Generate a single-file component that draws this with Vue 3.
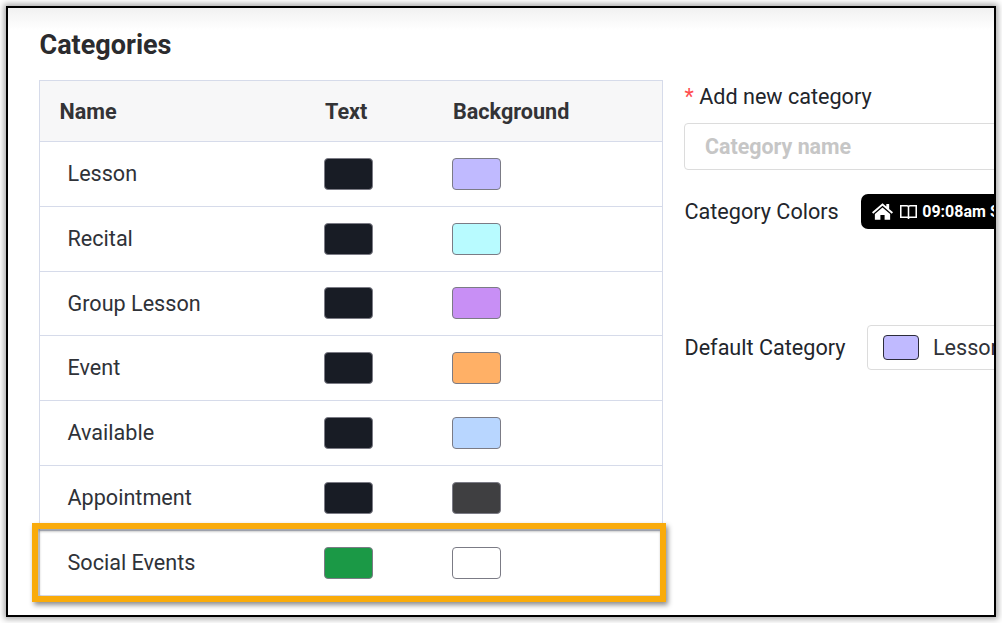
<script setup>
const rows = [
  { name: 'Lesson', text: '#181c25', bg: '#c0baff' },
  { name: 'Recital', text: '#181c25', bg: '#b8fbff' },
  { name: 'Group Lesson', text: '#181c25', bg: '#c88ff5' },
  { name: 'Event', text: '#181c25', bg: '#ffb066' },
  { name: 'Available', text: '#181c25', bg: '#b8d6ff' },
  { name: 'Appointment', text: '#181c25', bg: '#3f3f41' },
  { name: 'Social Events', text: '#1b9946', bg: '#ffffff' }
]
</script>

<template>
  <div class="page">
    <div class="frame">
      <div class="content">
        <h1 class="title">Categories</h1>
        <div class="columns">
          <div class="table">
            <div class="row head">
              <div class="c-name">Name</div>
              <div class="c-text head-shift">Text</div>
              <div class="c-bg head-shift">Background</div>
            </div>
            <div v-for="r in rows" :key="r.name" class="row">
              <div class="c-name cell-name">{{ r.name }}</div>
              <div class="c-text"><span class="swatch" :style="{ background: r.text }"></span></div>
              <div class="c-bg"><span class="swatch" :style="{ background: r.bg }"></span></div>
            </div>
          </div>
          <div class="side">
            <div class="label"><span class="req">*</span> Add new category</div>
            <div class="input">Category name</div>
            <div class="color-line">
              <span class="side-label">Category Colors</span>
              <div class="chip">
                <svg class="home" viewBox="1 1.5 22 17.5" width="21" height="17">
                  <path fill="#fff" d="M12 1.500 1 11l1.300 1.500L12 4.200l9.700 8.300L23 11l-4-3.400V2.500h-3v2.500z"/>
                  <path fill="#fff" d="M12 6 4 12.800V19h5.800v-5h4.400v5H20v-6.200z"/>
                </svg>
                <svg class="book" viewBox="0.25 0.75 16.5 13.5" width="17" height="14">
                  <path fill="none" stroke="#fff" stroke-width="1.500" d="M1 1.500h6c1 0 1.500.5 1.500 1.500 0-1 .5-1.500 1.500-1.500h6v11h-6.500l-1 1-1-1H1zM8.500 3v9.500"/>
                </svg>
                <span class="chip-text">09:08am Social</span>
              </div>
            </div>
            <div class="default-line">
              <span class="side-label">Default Category</span>
              <div class="select">
                <span class="mini"></span>
                <span class="select-text">Lesson</span>
              </div>
            </div>
          </div>
        </div>
      </div>
      <div class="highlight"></div>
    </div>
  </div>
</template>

<style>
html, body { margin: 0; background: #fff; overflow: hidden; }
</style>

<style scoped>
.page {
  width: 1002px;
  height: 623px;
  box-sizing: border-box;
  padding: 6px;
  background: #fff;
  font-family: Roboto, "Liberation Sans", sans-serif;
  color: #2b2e33;
}
.frame {
  position: relative;
  width: 100%;
  height: 611px;
  box-sizing: border-box;
  border: 2px solid #000;
  box-shadow: 0 0 6px 2px rgba(0, 0, 0, 0.35);
  background: linear-gradient(#f1f1f1 0, #fff 22px);
  overflow: hidden;
}
.content {
  padding: 21px 0 0 31px;
}
.title {
  margin: 0 0 18px;
  font-size: 27px;
  line-height: 33px;
  font-weight: 700;
  color: #2b2b2e;
  padding-left: 0.5px;
}
.columns {
  display: flex;
  gap: 21px;
  align-items: flex-start;
}
.table {
  width: 624px;
  flex: none;
  box-sizing: border-box;
  border: 1px solid #d6dbea;
  border-bottom: 0;
}
.row {
  display: flex;
  align-items: center;
  height: 64.8px;
  box-sizing: border-box;
  border-bottom: 1px solid #d6dbea;
  font-size: 21.6px;
}
.row.head {
  height: 61px;
  background: #f7f7f8;
  font-weight: 700;
  color: #333336;
}
.c-name { width: 284px; box-sizing: border-box; padding-left: 19.5px; flex: none; }
.cell-name { padding-left: 27.5px; padding-bottom: 0.6px; color: #2f3238; }
.c-text { width: 128px; flex: none; display: flex; }
.c-bg { flex: 1; display: flex; }
.head-shift { box-sizing: border-box; padding-left: 1px; }
.swatch {
  display: block;
  width: 49px;
  height: 32px;
  box-sizing: border-box;
  border: 1px solid #7b7b85;
  border-radius: 4px;
}
.side {
  flex: none;
  width: 340px;
  margin-top: 2px;
}
.label {
  font-size: 21.6px;
  line-height: 30px;
  color: #22252b;
  padding-left: 0.5px;
}
.req { color: #ff4d4f; }
.input {
  margin-top: 11px;
  height: 47px;
  box-sizing: border-box;
  border: 1px solid #dcdcdc;
  border-radius: 4px;
  padding-left: 20px;
  font-size: 21.4px;
  font-weight: 700;
  line-height: 45px;
  color: #c6c6c6;
}
.color-line {
  margin-top: 24px;
  display: flex;
  align-items: center;
  gap: 22.5px;
}
.side-label {
  font-size: 21.6px;
  line-height: 30px;
  color: #22252b;
  white-space: nowrap;
  flex: none;
  padding-left: 0.5px;
}
.chip {
  width: 200px;
  height: 35px;
  background: #000;
  border-radius: 7px;
  display: flex;
  align-items: center;
  padding-left: 11px;
  box-sizing: border-box;
  color: #fff;
  font-size: 16px;
  font-weight: 700;
  white-space: nowrap;
  flex: none;
}
.home { margin-right: 7px; flex: none; }
.book { margin-right: 5px; flex: none; }
.default-line {
  margin-top: 96px;
  display: flex;
  align-items: center;
  gap: 21.5px;
}
.select {
  width: 200px;
  height: 45px;
  box-sizing: border-box;
  border: 1px solid #dcdcdc;
  border-radius: 4px;
  display: flex;
  align-items: center;
  padding-left: 15px;
  flex: none;
}
.mini {
  width: 36px;
  height: 25px;
  box-sizing: border-box;
  background: #c0baff;
  border: 1px solid #2c2c3a;
  border-radius: 4px;
  flex: none;
}
.select-text { margin-left: 14px; font-size: 21.6px; color: #2f3238; }
.highlight {
  position: absolute;
  left: 24px;
  top: 515px;
  width: 634px;
  height: 79px;
  box-sizing: border-box;
  border: 6px solid #f9ab0b;
  box-shadow: 2px 3px 5px rgba(0, 0, 0, 0.45), inset 1px 2px 3px rgba(0, 0, 0, 0.4);
}
</style>
